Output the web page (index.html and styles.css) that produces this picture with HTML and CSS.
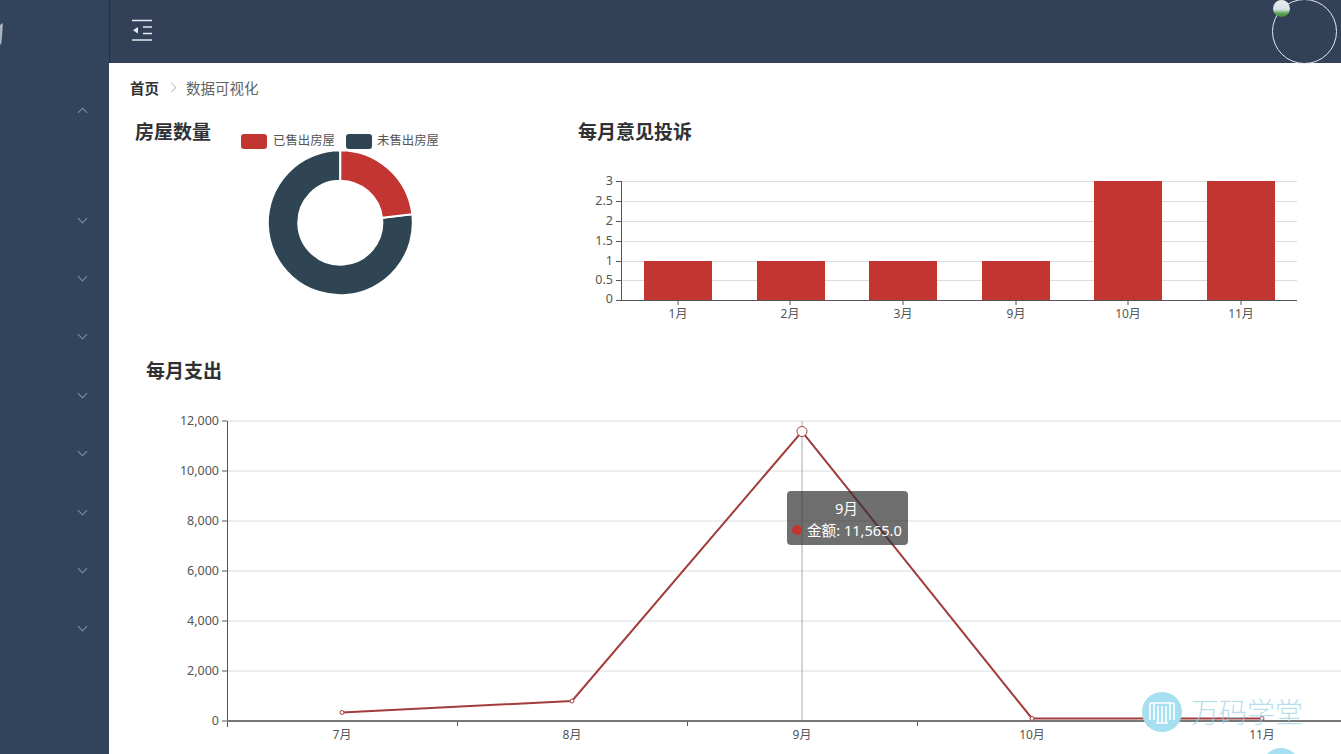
FILE: index.html
```html
<!DOCTYPE html>
<html lang="zh-CN">
<head>
    <meta charset="UTF-8">
    <meta name="viewport" content="width=device-width, initial-scale=1.0">
    <title>数据可视化</title>
    <link rel="stylesheet" href="styles.css">
</head>
<body>
    <div class="app">
        <aside class="sidebar">
            <svg class="logo-sliver" width="6" height="26" viewBox="0 0 6 26">
                <path d="M0 4 L3 2 L1.5 22 L0 24 Z" fill="#aab4c0"/>
            </svg>
            <ul class="menu">
                <li class="menu-item first"><span class="arrow up"></span></li>
                <li class="menu-item"><span class="arrow"></span></li>
                <li class="menu-item"><span class="arrow"></span></li>
                <li class="menu-item"><span class="arrow"></span></li>
                <li class="menu-item"><span class="arrow"></span></li>
                <li class="menu-item"><span class="arrow"></span></li>
                <li class="menu-item"><span class="arrow"></span></li>
                <li class="menu-item"><span class="arrow"></span></li>
                <li class="menu-item"><span class="arrow"></span></li>
            </ul>
        </aside>
        <main class="main">
            <header class="topbar">
                <svg class="fold-icon" width="22" height="22" viewBox="0 0 22 22">
                    <path d="M1 1.5 H21 M12 8 H21 M12 14.5 H21 M1 21 H21" stroke="#e6e9ee" stroke-width="1.6" fill="none"/>
                    <path d="M2 11.2 L7 8 V14.5 Z" fill="#e6e9ee"/>
                </svg>
                <div class="avatar">
                    <span class="avatar-img"></span>
                </div>
            </header>
            <div class="breadcrumb">
                <span class="crumb-home">首页</span>
                <span class="crumb-sep"></span>
                <span class="crumb-now">数据可视化</span>
            </div>
            <section class="top-row">
                <div class="pie-panel">
                    <h2 class="chart-title">房屋数量</h2>
                    <svg class="pie-chart" width="225" height="180" viewBox="230 125 225 180">
                        <rect x="241" y="134" width="26" height="15" rx="3" fill="#c23531"/>
                        <text class="legend" x="273" y="145">已售出房屋</text>
                        <rect x="346" y="134" width="26" height="15" rx="3" fill="#2f4554"/>
                        <text class="legend" x="377" y="145">未售出房屋</text>
                        <path d="M412.3 214.2 A72.5 72.5 0 1 1 340.3 150.2 L340.3 180.7 A42 42 0 1 0 382 217.8 Z" fill="#2f4554" stroke="#fff" stroke-width="2"/>
                        <path d="M340.3 150.2 A72.5 72.5 0 0 1 412.3 214.2 L382 217.8 A42 42 0 0 0 340.3 180.7 Z" fill="#c23531" stroke="#fff" stroke-width="2"/>
                    </svg>
                </div>
                <div class="bar-panel">
                    <h2 class="chart-title">每月意见投诉</h2>
                    <svg class="bar-chart" width="740" height="160" viewBox="578 165 740 160">
                        <g class="grid">
                            <path d="M621 181.5 H1297 M621 201.5 H1297 M621 221.5 H1297 M621 241.5 H1297 M621 261.5 H1297 M621 280.5 H1297"/>
                        </g>
                        <g fill="#c23531">
                            <rect x="644" y="261" width="68" height="39"/>
                            <rect x="757" y="261" width="68" height="39"/>
                            <rect x="869" y="261" width="68" height="39"/>
                            <rect x="982" y="261" width="68" height="39"/>
                            <rect x="1094" y="181" width="68" height="119"/>
                            <rect x="1207" y="181" width="68" height="119"/>
                        </g>
                        <path class="axis" d="M621.5 181 V300 M616 181.5 H621 M616 201.5 H621 M616 221.5 H621 M616 241.5 H621 M616 261.5 H621 M616 280.5 H621 M616 300.5 H1297 M678 300 V305 M790 300 V305 M903 300 V305 M1016 300 V305 M1128 300 V305 M1241 300 V305"/>
                        <g class="y-labels">
                            <text x="613" y="185">3</text>
                            <text x="613" y="205">2.5</text>
                            <text x="613" y="225">2</text>
                            <text x="613" y="245">1.5</text>
                            <text x="613" y="265">1</text>
                            <text x="613" y="284">0.5</text>
                            <text x="613" y="303">0</text>
                        </g>
                        <g class="x-labels">
                            <text x="678" y="318">1月</text>
                            <text x="790" y="318">2月</text>
                            <text x="903" y="318">3月</text>
                            <text x="1016" y="318">9月</text>
                            <text x="1128" y="318">10月</text>
                            <text x="1241" y="318">11月</text>
                        </g>
                    </svg>
                </div>
            </section>
            <section class="line-panel">
                <h2 class="chart-title">每月支出</h2>
                <div class="line-wrap">
                    <svg class="line-chart" width="1181" height="344" viewBox="160 410 1181 344">
                        <path class="grid" d="M227 421 H1341 M227 471 H1341 M227 521 H1341 M227 571 H1341 M227 621 H1341 M227 671 H1341"/>
                        <path class="pointer" d="M802 421 V721"/>
                        <path class="axis" d="M227.5 421 V727 M222 421 H227 M222 471 H227 M222 521 H227 M222 571 H227 M222 621 H227 M222 671 H227 M222 721 H227 M457.5 721 V726 M687.5 721 V726 M917.5 721 V726 M1147.5 721 V726"/>
                        <path class="axis-x" d="M227 721 H1341"/>
                        <g class="y-labels">
                            <text x="219" y="425">12,000</text>
                            <text x="219" y="475">10,000</text>
                            <text x="219" y="525">8,000</text>
                            <text x="219" y="575">6,000</text>
                            <text x="219" y="625">4,000</text>
                            <text x="219" y="675">2,000</text>
                            <text x="219" y="725">0</text>
                        </g>
                        <g class="x-labels">
                            <text x="342" y="739">7月</text>
                            <text x="572" y="739">8月</text>
                            <text x="802" y="739">9月</text>
                            <text x="1032" y="739">10月</text>
                            <text x="1262" y="739">11月</text>
                        </g>
                        <path class="line" d="M342 712.5 L572 701 L802 431.5 L1032 718.5 L1262 718.5"/>
                        <g class="dots">
                            <circle cx="342" cy="712.5" r="2"/>
                            <circle cx="572" cy="701" r="2"/>
                            <circle cx="802" cy="431.5" r="5"/>
                            <circle cx="1032" cy="718.5" r="2"/>
                            <circle cx="1262" cy="718.5" r="2"/>
                        </g>
                    </svg>
                    <div class="tooltip">
                        <div class="tooltip-title">9月</div>
                        <div class="tooltip-row"><span class="tooltip-dot"></span>金额: 11,565.0</div>
                    </div>
                </div>
            </section>
        </main>
        <div class="watermark">
            <svg width="40" height="40" viewBox="0 0 40 40">
                <circle cx="20" cy="20" r="20" fill="#a6dff0"/>
                <path d="M8 11 H32 M8 11 V28 M12 11 V28 M16 14 V31 M20 14 V31 M24 14 V31 M28 11 V28 M32 11 V28 M14 31 H26" stroke="#fff" stroke-width="1.6" fill="none"/>
            </svg>
            <span class="watermark-text">万码学堂</span>
        </div>
        <span class="watermark-circle"></span>
    </div>
</body>
</html>
```

FILE: styles.css
```css
* {
    box-sizing: border-box;
}
body {
    margin: 0;
    font-family: "Noto Sans", "Noto Sans CJK SC", sans-serif;
    background-color: #fff;
    overflow: hidden;
}
.app {
    position: relative;
    display: flex;
    height: 100vh;
    overflow: hidden;
}
.sidebar {
    position: relative;
    flex: none;
    width: 109px;
    background-color: #32435c;
}
.logo-sliver {
    position: absolute;
    left: 0;
    top: 21px;
}
.menu {
    list-style: none;
    margin: 0;
    padding: 81px 0 0;
}
.menu-item {
    display: flex;
    justify-content: flex-end;
    align-items: center;
    height: 58.4px;
    padding-right: 23px;
}
.menu-item.first {
    margin-bottom: 51.6px;
}
.arrow {
    width: 7px;
    height: 7px;
    border-right: 1px solid #7d90a8;
    border-bottom: 1px solid #7d90a8;
    transform: translateY(-2px) rotate(45deg);
}
.arrow.up {
    transform: translateY(2px) rotate(225deg);
}
.main {
    flex: 1;
    min-width: 0;
}
.topbar {
    display: flex;
    justify-content: space-between;
    align-items: center;
    height: 63px;
    padding: 0 4px 3px 22px;
    background-color: #334158;
    border-left: 1px solid #263244;
}
.fold-icon {
    margin-left: -1px;
}
.avatar {
    position: relative;
    width: 65px;
    height: 65px;
    margin-bottom: -3px;
    border: 1.5px solid #e4e8ee;
    border-radius: 50%;
}
.avatar-img {
    position: absolute;
    left: 0;
    top: 0;
    width: 17px;
    height: 17px;
    border-radius: 50%;
    background: linear-gradient(#e8edf2 0%, #d8e2e8 55%, #5aa34f 80%, #3f8f3f 100%);
}
.breadcrumb {
    display: flex;
    align-items: center;
    height: 52px;
    padding: 0 0 3px 21px;
    font-size: 14.5px;
}
.crumb-home {
    font-weight: 700;
    color: #303133;
}
.crumb-sep {
    width: 7px;
    height: 7px;
    margin: 0 11px 0 9px;
    border-top: 1px solid #c0c4cc;
    border-right: 1px solid #c0c4cc;
    transform: rotate(45deg);
}
.crumb-now {
    color: #606266;
}
.chart-title {
    flex: none;
    margin: 0;
    font-size: 19px;
    line-height: 34px;
    font-weight: 700;
    color: #303133;
}
.top-row {
    display: flex;
    height: 239px;
}
.pie-panel {
    display: flex;
    align-items: flex-start;
    gap: 19px;
    flex: none;
    width: 469px;
    padding-left: 26px;
}
.pie-chart {
    display: block;
    margin-top: 10px;
}
.bar-chart {
    display: block;
    margin-top: 16px;
}
.legend {
    font-size: 12.4px;
    fill: #555;
}
.grid {
    fill: none;
    stroke: #dcdcdc;
    stroke-width: 1;
}
.axis {
    fill: none;
    stroke: #555;
    stroke-width: 1;
}
.axis-x {
    fill: none;
    stroke: #777;
    stroke-width: 2;
}
.pointer {
    fill: none;
    stroke: #aaa;
    stroke-width: 1;
}
.y-labels text {
    font-size: 12.5px;
    fill: #555;
    text-anchor: end;
}
.x-labels text {
    font-size: 12px;
    fill: #555;
    text-anchor: middle;
}
.line {
    fill: none;
    stroke: #a33c3c;
    stroke-width: 2;
}
.dots circle {
    fill: #fff;
    stroke: #a33c3c;
    stroke-width: 1;
}
.line-panel {
    padding-left: 37px;
}
.line-wrap {
    position: relative;
    width: 1181px;
    margin: 22px 0 0 14px;
}
.line-chart {
    display: block;
}
.tooltip {
    position: absolute;
    left: 627px;
    top: 81px;
    width: 121px;
    height: 54px;
    padding-top: 6px;
    border-radius: 4px;
    background-color: rgba(50, 50, 50, 0.7);
    font-size: 14.6px;
    line-height: 22px;
    color: #fff;
}
.tooltip-title {
    text-align: center;
    margin-left: -2px;
}
.tooltip-row {
    display: flex;
    align-items: center;
    gap: 5px;
    padding-left: 5px;
    white-space: nowrap;
}
.tooltip-dot {
    flex: none;
    width: 10px;
    height: 10px;
    border-radius: 50%;
    background-color: #c23531;
}
.watermark {
    position: absolute;
    left: 1142px;
    top: 692px;
    display: flex;
    align-items: center;
    gap: 9px;
}
.watermark svg {
    display: block;
}
.watermark-text {
    font-size: 28px;
    font-weight: 300;
    line-height: 28px;
    color: rgba(150, 208, 228, 0.7);
}
.watermark-circle {
    position: absolute;
    left: 1262px;
    top: 748px;
    width: 38px;
    height: 38px;
    border-radius: 50%;
    background-color: #a6dff0;
}
```
